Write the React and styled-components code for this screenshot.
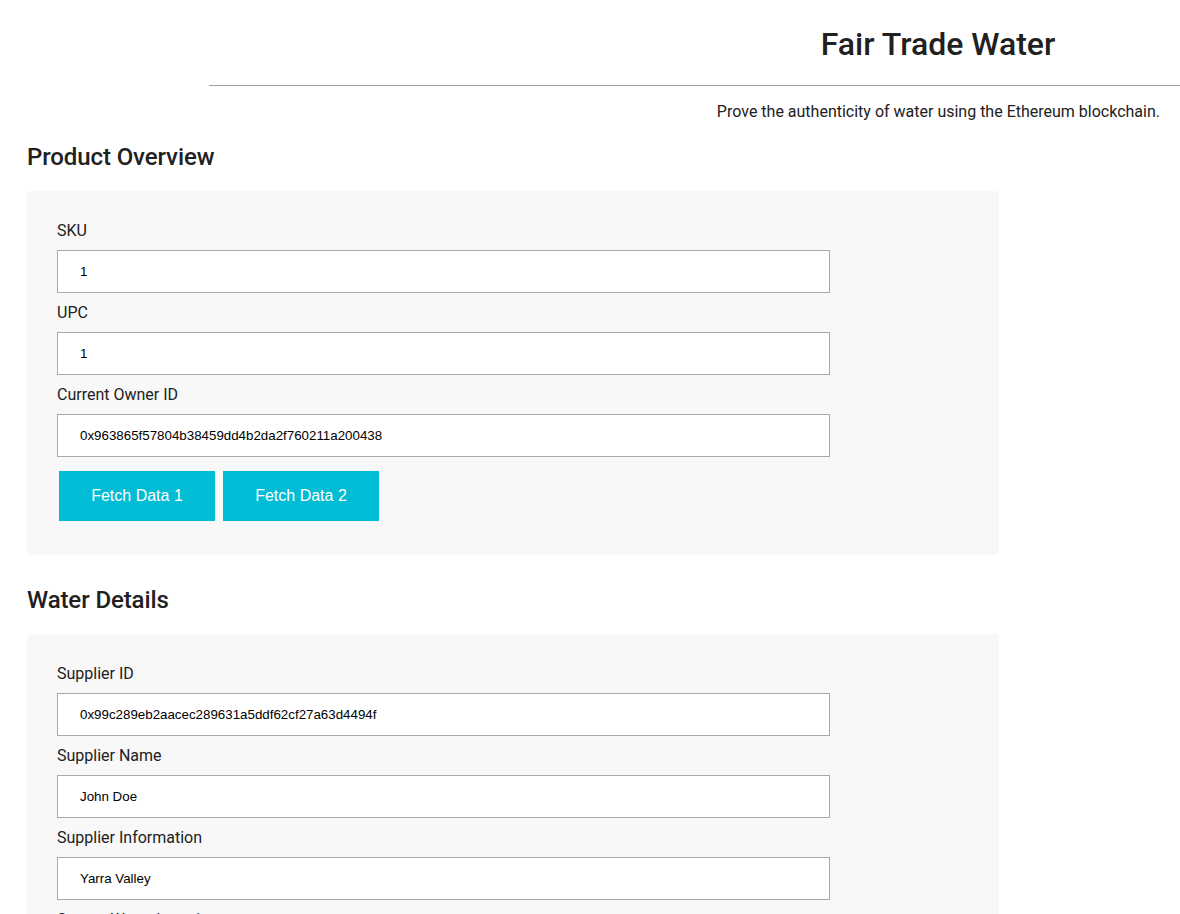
import React from 'react'
import styled, { createGlobalStyle } from 'styled-components'

const GlobalStyle = createGlobalStyle`
  * { box-sizing: border-box; }
  body {
    margin: 0;
    background: #ffffff;
    font-family: Roboto, "Noto Sans", Arial, sans-serif;
    color: #212121;
  }
`;

const Page = styled.div`
  padding: 0 0 40px 0;
`;

const Header = styled.header`
  display: flex;
  flex-direction: column;
  padding-top: 25px;
`;

const TitleRow = styled.div`
  display: flex;
  justify-content: flex-end;
`;

const Title = styled.h1`
  width: 484px;
  margin: 0;
  text-align: center;
  font-size: 32px;
  line-height: 38px;
  font-weight: 500;
  color: #212121;
`;

const Rule = styled.hr`
  margin: 22px 0 0 209px;
  border: none;
  border-top: 1px solid #a0a0a0;
  height: 0;
`;

const Tagline = styled.p`
  margin: 16px 20px 0 0;
  text-align: right;
  font-size: 16px;
  line-height: 20px;
`;

const Main = styled.main`
  padding: 0 0 0 27px;
  width: 999px;
`;

const SectionTitle = styled.h2`
  margin: ${p => (p.$first ? '21px' : '31px')} 0 20px 0;
  font-size: 24px;
  line-height: 28px;
  font-weight: 500;
  letter-spacing: -0.1px;
  color: #212121;
`;

const Panel = styled.section`
  background: #f8f8f8;
  border-radius: 4px;
  padding: 20px 30px 34px 30px;
`;

const Label = styled.label`
  display: block;
  padding: 10px 0 9px 0;
  font-size: 16px;
  line-height: 20px;
  color: #212121;
`;

const Input = styled.input`
  display: block;
  width: 773px;
  height: 43px;
  padding: 0 22px;
  border: 1px solid #a9a9a9;
  background: #ffffff;
  font-family: "Liberation Sans", Arial, sans-serif;
  font-size: 13.33px;
  color: #000;
  outline: none;
`;

const Actions = styled.div`
  display: flex;
  gap: 8px;
  margin: 14px 0 0 2px;
`;

const Button = styled.button`
  width: 156px;
  height: 50px;
  border: none;
  background: #00bcd4;
  color: #ffffff;
  font-family: "Liberation Sans", Arial, sans-serif;
  font-size: 16px;
  cursor: pointer;
`;

const Field = ({ label, value }) => (
  <div>
    <Label>{label}</Label>
    <Input defaultValue={value} />
  </div>
);

const overview = [
  { label: 'SKU', value: '1' },
  { label: 'UPC', value: '1' },
  { label: 'Current Owner ID', value: '0x963865f57804b38459dd4b2da2f760211a200438' },
];

const water = [
  { label: 'Supplier ID', value: '0x99c289eb2aacec289631a5ddf62cf27a63d4494f' },
  { label: 'Supplier Name', value: 'John Doe' },
  { label: 'Supplier Information', value: 'Yarra Valley' },
  { label: 'Source Water Location', value: '-37.6583' },
  { label: 'Source Water Longitude', value: '145.4507' },
];

export default function App() {
  return (
    <Page>
      <GlobalStyle />
      <Header>
        <TitleRow>
          <Title>Fair Trade Water</Title>
        </TitleRow>
        <Rule />
        <Tagline>Prove the authenticity of water using the Ethereum blockchain.</Tagline>
      </Header>
      <Main>
        <SectionTitle $first>Product Overview</SectionTitle>
        <Panel>
          {overview.map(f => <Field key={f.label} {...f} />)}
          <Actions>
            <Button>Fetch Data 1</Button>
            <Button>Fetch Data 2</Button>
          </Actions>
        </Panel>
        <SectionTitle>Water Details</SectionTitle>
        <Panel>
          {water.map(f => <Field key={f.label} {...f} />)}
        </Panel>
      </Main>
    </Page>
  );
}
